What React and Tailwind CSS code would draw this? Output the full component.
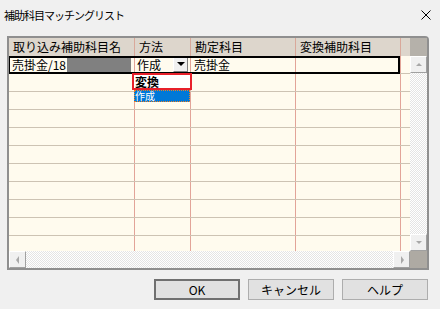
import React from 'react';

const jp = { fontFamily: '"Noto Sans CJK JP", "Noto Sans", sans-serif' };

const cols = [
  { w: 'w-[126px]', head: '取り込み補助科目名' },
  { w: 'w-[56px]', head: '方法' },
  { w: 'w-[105px]', head: '勘定科目' },
  { w: 'w-[105px]', head: '変換補助科目' },
  { w: 'w-[9px]', head: '' },
];

const checker =
  'bg-[repeating-conic-gradient(#ffffff_0_25%,#e4e4e4_0_50%)] bg-[length:2px_2px]';

function ScrollBtn({ dir, className = '' }) {
  const pts = {
    up: '2,6 5,3 8,6',
    down: '2,3 5,6 8,3',
    left: '6,1 3,5 6,9',
    right: '4,1 7,5 4,9',
  }[dir];
  return (
    <div
      className={`w-[17px] h-[17px] shrink-0 bg-[#f0f0f0] border border-t-white border-l-white border-r-[#a0a0a0] border-b-[#a0a0a0] flex items-center justify-center ${className}`}
    >
      <svg width="10" height="10" viewBox="0 0 10 10">
        <polygon points={pts} fill="#a8a8a8" />
      </svg>
    </div>
  );
}

function Row({ first }) {
  return (
    <div className="flex h-[18px] shrink-0 border-b border-[#cdc3b3] bg-[#fffbee]">
      {cols.map((c, i) => (
        <div
          key={i}
          className={`${c.w} shrink-0 h-full ${i < 4 ? 'border-r border-[#e2a498]' : ''} flex items-center`}
        >
          {first && i === 0 && (
            <div className="flex items-center pl-[3px] text-[12px] leading-none">
              <span>売掛金/18</span>
              <span className="ml-[1px] w-[64px] h-[14px] bg-[#808080]" />
            </div>
          )}
          {first && i === 1 && (
            <div className="flex items-center justify-between w-full pl-[2px] pr-[2px] text-[12px] leading-none">
              <span>作成</span>
              <div className="w-[15px] h-[15px] bg-[#f0f0f0] border border-t-white border-l-white border-r-[#808080] border-b-[#808080] flex items-center justify-center">
                <svg width="8" height="5" viewBox="0 0 8 5">
                  <polygon points="0,0 8,0 4,4" fill="#000" />
                </svg>
              </div>
            </div>
          )}
          {first && i === 2 && (
            <span className="pl-[3px] text-[12px] leading-none">売掛金</span>
          )}
        </div>
      ))}
    </div>
  );
}

export default function App() {
  return (
    <div className="w-[440px] h-[309px] bg-[#f0f0f0] flex flex-col text-black overflow-hidden" style={jp}>
      {/* title bar */}
      <div className="h-[30px] flex items-center justify-between pl-[4px] pr-[9px] shrink-0">
        <span className="text-[11px] tracking-[-1px] leading-none">補助科目マッチングリスト</span>
        <svg width="10" height="10" viewBox="0 0 10 10">
          <path d="M0.5 0.5 L9.5 9.5 M9.5 0.5 L0.5 9.5" stroke="#000" strokeWidth="1" />
        </svg>
      </div>

      {/* grid frame */}
      <div className="mt-[6px] ml-[7px] w-[422px] h-[234px] border-2 border-[#8f8f8f] rounded-tr-[4px] flex shrink-0 bg-white">
        <div className="w-[401px] flex flex-col">
          <div className="h-[213px] overflow-hidden relative flex flex-col">
            <div className="flex h-[18px] shrink-0 bg-[#ddd6cc]">
              {cols.map((c, i) => (
                <div
                  key={i}
                  className={`${c.w} shrink-0 h-full ${i < 4 ? 'border-r border-[#d9a89a]' : ''} flex items-center pl-[4px] text-[12px] leading-none whitespace-nowrap`}
                >
                  {c.head}
                </div>
              ))}
            </div>
            {Array.from({ length: 11 }).map((_, i) => (
              <Row key={i} first={i === 0} />
            ))}

            {/* selected row outline */}
            <div className="absolute left-[-1px] top-[18px] w-[392px] h-[18px] border-2 border-black pointer-events-none" />

            {/* open dropdown list */}
            <div className="absolute left-[123px] top-[35px] w-[60px] flex flex-col">
              <div className="h-[17px] border-2 border-[#e8202a] bg-white flex items-center pl-[1px] text-[12px] leading-none font-bold">
                変換
              </div>
              <div className="mx-[2px] h-[12px] bg-[#0078d7] border border-dotted border-[#f08020] text-white flex items-center text-[10px] leading-[10px]">
                作成
              </div>
            </div>
          </div>
          <div className={`h-[17px] flex shrink-0 ${checker}`}>
            <ScrollBtn dir="left" />
            <div className="flex-1" />
            <ScrollBtn dir="right" />
          </div>
        </div>
        <div className="w-[17px] flex flex-col">
          <div className="h-[18px] shrink-0 bg-[#b5b1aa]" />
          <ScrollBtn dir="up" />
          <div className={`flex-1 ${checker}`} />
          <ScrollBtn dir="down" />
          <div className="h-[17px] shrink-0 bg-[#aeaaa3]" />
        </div>
      </div>

      {/* buttons */}
      <div className="mt-[9px] flex justify-end gap-[8px] pr-[12px]">
        <button className="w-[86px] h-[21px] bg-[#e1e1e1] border-2 border-[#707070] text-[12px] leading-none">OK</button>
        <button className="w-[86px] h-[21px] bg-[#e1e1e1] border border-[#adadad] text-[12px] leading-none">キャンセル</button>
        <button className="w-[86px] h-[21px] bg-[#e1e1e1] border border-[#adadad] text-[12px] leading-none">ヘルプ</button>
      </div>
    </div>
  );
}
